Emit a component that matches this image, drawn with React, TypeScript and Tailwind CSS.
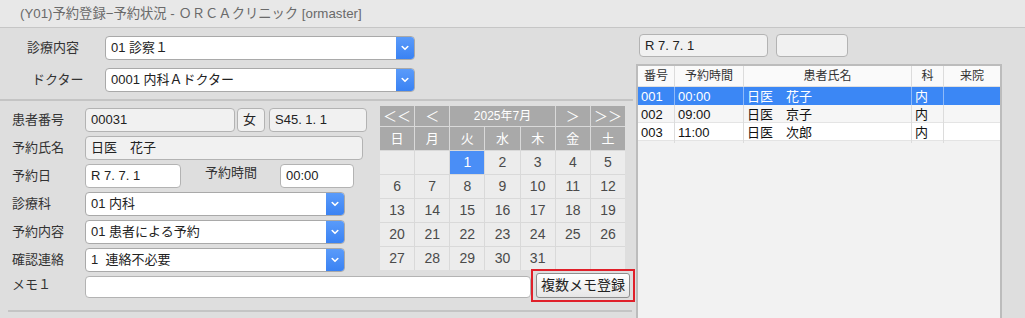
import React from "react";

const Chevron = () => (
  <svg width="8" height="6" viewBox="0 0 8 6" fill="none">
    <path d="M1.2 1.5 L4 4.3 L6.8 1.5" stroke="white" strokeWidth="1.6" strokeLinecap="round" strokeLinejoin="round" />
  </svg>
);

function Select({ value, className }: { value: string; className: string }) {
  return (
    <div className={`flex h-[24px] border border-[#a9a9a9] rounded-[4px] bg-white overflow-hidden ${className}`}>
      <div className="flex-1 flex items-center pl-[5px] text-[13px] text-[#222] whitespace-pre">{value}</div>
      <div className="w-[18px] bg-gradient-to-b from-[#5a9bfa] to-[#3a82f3] flex items-center justify-center">
        <Chevron />
      </div>
    </div>
  );
}

function Field({ value, className, white }: { value: string; className: string; white?: boolean }) {
  return (
    <div
      className={`flex items-center h-[24px] border border-[#b3b3b3] rounded-[4px] pl-[5px] text-[13px] text-[#222] whitespace-pre ${
        white ? "bg-white" : "bg-[#f1f1f1]"
      } ${className}`}
    >
      {value}
    </div>
  );
}

const days: (number | null)[] = [null, null, 1, 2, 3, 4, 5];
for (let d = 6; d <= 31; d++) days.push(d);
while (days.length < 35) days.push(null);

export default function App() {
  const rows = [
    { no: "001", t: "00:00", name: "日医　花子", ka: "内", sel: true, bg: "" },
    { no: "002", t: "09:00", name: "日医　京子", ka: "内", sel: false, bg: "bg-[#f6f6f6]" },
    { no: "003", t: "11:00", name: "日医　次郎", ka: "内", sel: false, bg: "bg-white" },
  ];
  return (
    <div className="w-[1025px] h-[318px] overflow-hidden bg-[#dedede] flex flex-col font-['Liberation_Sans','Noto_Sans_CJK_JP',sans-serif] text-[13px] text-[#333]">
      {/* title */}
      <div className="h-[28px] shrink-0 bg-[#e8e8e8] border-b border-[#c6c6c6] flex items-center pl-[20px] text-[13.3px] text-[#6a6a6a]">
        (Y01)予約登録−予約状況 - ＯＲＣＡクリニック [ormaster]
      </div>

      <div className="flex flex-1 min-h-0">
        {/* left */}
        <div className="w-[637px] shrink-0 flex flex-col">
          <div className="pt-[8px] pb-[7px] flex flex-col gap-[8px]">
            <div className="flex items-center h-[24px]">
              <div className="w-[105px] pl-[27px] text-[#333]">診療内容</div>
              <Select value="01 診察１" className="w-[310px]" />
            </div>
            <div className="flex items-center h-[24px]">
              <div className="w-[105px] pl-[32px] text-[#333]">ドクター</div>
              <Select value="0001 内科Ａドクター" className="w-[310px]" />
            </div>
          </div>
          <div className="h-[2px] w-[633px] bg-[#c4c4c4]" />

          <div className="flex flex-col pl-[12px] pt-[5px]">
            <div className="flex">
              <div className="w-[356px] pt-[2px] flex flex-col gap-[4px]">
                <div className="flex items-center h-[24px]">
                  <div className="w-[73px]">患者番号</div>
                  <Field value="00031" className="w-[150px]" />
                  <Field value="女" className="w-[28px] ml-[2px]" />
                  <Field value="S45. 1. 1" className="w-[98px] ml-[4px]" />
                </div>
                <div className="flex items-center h-[24px]">
                  <div className="w-[73px]">予約氏名</div>
                  <Field value="日医　花子" className="w-[278px]" />
                </div>
                <div className="flex items-center h-[24px]">
                  <div className="w-[73px]">予約日</div>
                  <Field value="R 7. 7. 1" className="w-[96px]" white />
                  <div className="ml-[24px] w-[75px] self-start -mt-[1px]">予約時間</div>
                  <Field value="00:00" className="w-[74px]" white />
                </div>
                <div className="flex items-center h-[24px]">
                  <div className="w-[73px]">診療科</div>
                  <Select value="01 内科" className="w-[260px]" />
                </div>
                <div className="flex items-center h-[24px]">
                  <div className="w-[73px]">予約内容</div>
                  <Select value="01 患者による予約" className="w-[260px]" />
                </div>
                <div className="flex items-center h-[24px]">
                  <div className="w-[73px]">確認連絡</div>
                  <Select value="1  連絡不必要" className="w-[260px]" />
                </div>
              </div>

              {/* calendar */}
              <div className="ml-[12px] w-[245px] grid grid-cols-7 gap-px bg-[#d9d9d9] self-start">
                <div className="h-[20px] bg-[#a9a9a9] text-white flex items-center justify-center text-[14px]">＜＜</div>
                <div className="h-[20px] bg-[#a9a9a9] text-white flex items-center justify-center text-[14px]">＜</div>
                <div className="h-[20px] col-span-3 bg-[#a9a9a9] text-white flex items-center justify-center text-[12px]">2025年7月</div>
                <div className="h-[20px] bg-[#a9a9a9] text-white flex items-center justify-center text-[14px]">＞</div>
                <div className="h-[20px] bg-[#a9a9a9] text-white flex items-center justify-center text-[14px]">＞＞</div>
                {["日", "月", "火", "水", "木", "金", "土"].map((d) => (
                  <div key={d} className="h-[23px] bg-[#a9a9a9] text-white flex items-center justify-center text-[13px]">
                    {d}
                  </div>
                ))}
                {days.map((d, i) => (
                  <div
                    key={i}
                    className={`h-[23px] flex items-center justify-center text-[14px] ${
                      d === 1 ? "bg-[#4a8ef6] text-white" : "bg-[#ececec] text-[#4a4a4a]"
                    }`}
                  >
                    {d ?? ""}
                  </div>
                ))}
              </div>
            </div>

            <div className="flex items-start h-[24px] mt-[4px]">
              <div className="w-[73px] -mt-[1px]">メモ１</div>
              <div className="w-[446px] h-[22px] bg-white border border-[#b3b3b3] rounded-[4px]" />
              <div className="-mt-[7px] h-[33px] border-2 border-[#e0202a] px-[3px] py-[2px]">
                <button className="w-[94px] h-[25px] rounded-[3px] border border-[#8e8e8e] bg-gradient-to-b from-white to-[#e6e6e6] text-[14px] text-[#222] flex items-center justify-center">
                  複数メモ登録
                </button>
              </div>
            </div>
          </div>
          <div className="mt-[10px] ml-[8px] h-[2px] w-[624px] bg-[#c4c4c4]" />
        </div>

        {/* right */}
        <div className="w-[366px] shrink-0 flex flex-col pt-[6px] -ml-[1px]">
          <div className="flex h-[22px]">
            <Field value="R 7. 7. 1" className="ml-[3px] w-[129px] !h-[23px]" />
            <Field value="" className="ml-[8px] w-[72px] !h-[23px]" />
          </div>
          <div className="mt-[8px] flex-1 border-2 border-b-0 border-[#bcbcbc] bg-[#f2f2f2] flex flex-col">
            <div className="grid grid-cols-[37px_69px_168px_32px_1fr] h-[21px] bg-[#fafafa] border-b border-[#e0e0e0] text-[12px] text-[#333]">
              {["番号", "予約時間", "患者氏名", "科", "来院"].map((h, i) => (
                <div key={h} className={`flex items-center justify-center ${i < 4 ? "border-r border-[#dcdcdc]" : ""}`}>
                  {h}
                </div>
              ))}
            </div>
            {rows.map((r) => (
              <div
                key={r.no}
                className={`grid grid-cols-[37px_69px_168px_32px_1fr] h-[18px] border-b text-[13px] ${
                  r.sel ? "bg-[#3b87f5] text-white border-[#3b87f5]" : `${r.bg} text-[#111] border-[#e4e4e4]`
                }`}
              >
                {[r.no, r.t, r.name, r.ka, ""].map((c, i) => (
                  <div
                    key={i}
                    className={`flex items-center pl-[3px] ${
                      i < 4 ? (r.sel ? "border-r border-[#8fbaf8]" : "border-r border-[#dcdcdc]") : ""
                    }`}
                  >
                    {c}
                  </div>
                ))}
              </div>
            ))}
          </div>
        </div>
      </div>
    </div>
  );
}
